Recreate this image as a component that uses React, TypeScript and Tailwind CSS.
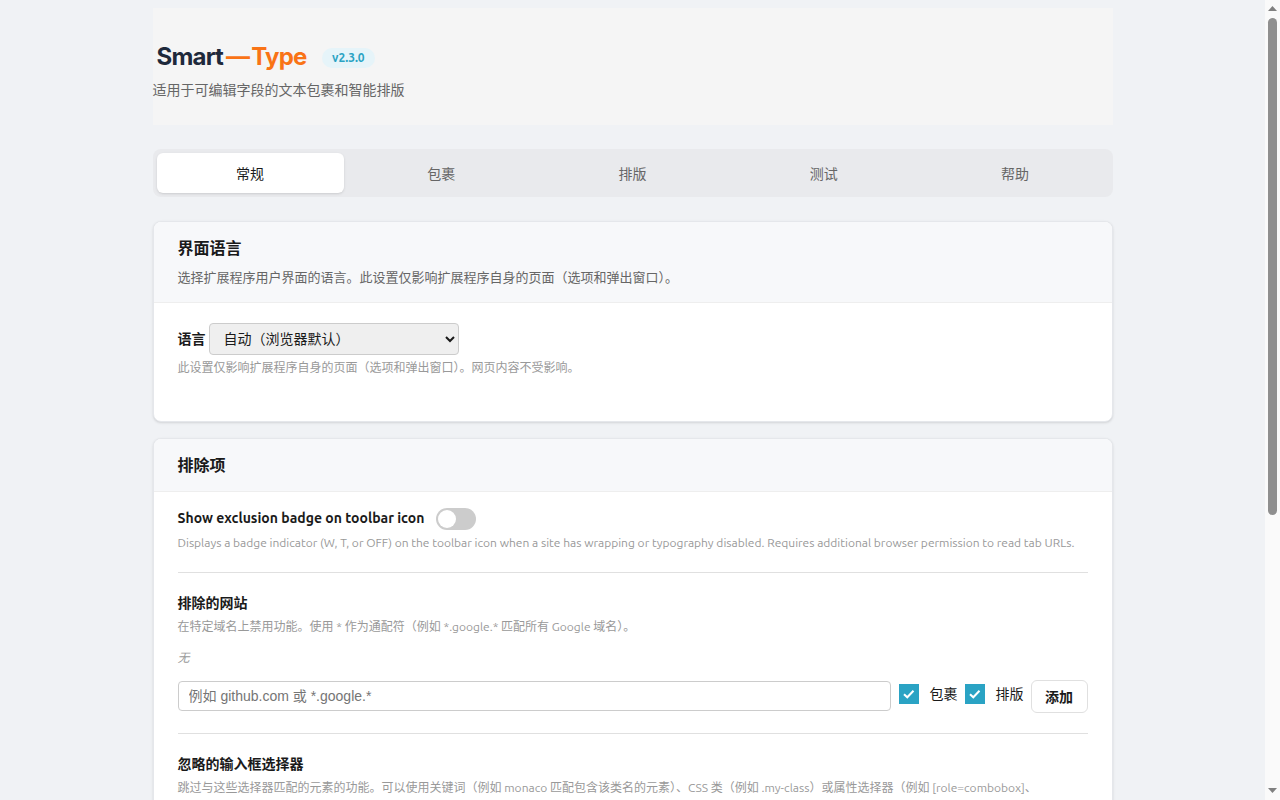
// ============================================================
// Options page
// ============================================================

const tabs = ['常规', '包裹', '排版', '测试', '帮助']

function Check({ label, className }: { label: string; className?: string }) {
  return (
    <label className={`mt-1 flex items-center gap-[11px] text-sm text-[#1a1a1a] ${className ?? ''}`}>
      <span className="flex h-5 w-5 items-center justify-center bg-[#2aa3c4]">
        <svg width="12" height="12" viewBox="0 0 12 12" fill="none">
          <path d="M1 6.2 L4.3 9.3 L10.5 2.8" stroke="white" strokeWidth="2" />
        </svg>
      </span>
      {label}
    </label>
  )
}

// The window's own scrollbar does not get drawn here, so it is part of the page
function Scrollbar() {
  return (
    <div className="flex h-screen w-[15px] shrink-0 flex-col items-center bg-[#fafafa]">
      <svg width="9" height="5" viewBox="0 0 9 5" className="mt-[6px] shrink-0">
        <path d="M4.5 0 L9 5 L0 5 Z" fill="#808080" />
      </svg>
      <div className="mt-[7px] h-[497px] w-[9px] shrink-0 rounded-full bg-[#8f8f8f]" />
      <div className="flex-1" />
      <svg width="9" height="5" viewBox="0 0 9 5" className="mb-[7px] shrink-0">
        <path d="M0 0 L9 0 L4.5 5 Z" fill="#808080" />
      </svg>
    </div>
  )
}

export default function App() {
  return (
    <div className="flex h-screen overflow-hidden bg-[#f0f2f5] font-['Ubuntu','Noto_Sans_CJK_SC',sans-serif]">
      <main className="h-screen min-w-0 flex-1 overflow-hidden">
        <div className="mx-auto w-[960px] pt-2 pb-6">
          {/* Header */}
          <header className="h-[117px] bg-[#f5f5f5] pt-[34px]">
            <div className="flex h-[32px] items-center pl-1">
              <h1 className="mb-[2px] font-['Inter',sans-serif] text-2xl font-bold tracking-[-0.8px] text-[#1e293b]">
                Smart<span className="mr-[2px] ml-[3px] text-[#f97316]">—</span>
                <span className="text-[#f97316]">Type</span>
              </h1>
              <span className="ml-[15px] rounded-full bg-[#e6f4f9] px-[10.5px] py-[2px] text-xs font-semibold text-[#2aa3c4]">
                v2.3.0
              </span>
            </div>
            <p className="mt-[6px] text-sm leading-[20px] text-[#666666]">适用于可编辑字段的文本包裹和智能排版</p>
          </header>

          {/* Tabs */}
          <nav className="mt-6 flex h-12 gap-1 rounded-lg bg-[#e9eaed] p-1">
            {tabs.map((t, i) => (
              <div
                key={t}
                className={`flex flex-1 items-center justify-center rounded-md pt-[2px] text-sm ${
                  i === 0 ? 'bg-white text-[#1a1a1a] shadow-sm' : 'text-[#666666]'
                }`}
              >
                {t}
              </div>
            ))}
          </nav>

          {/* Language */}
          <section className="mt-6 overflow-hidden rounded-lg border border-[#e5e7eb] bg-white shadow-sm">
            <div className="h-[81px] border-b border-[#eeeeee] bg-[#f7f8fa] px-6 pt-[14px]">
              <h2 className="text-base leading-[24px] font-semibold text-[#1a1a1a]">界面语言</h2>
              <p className="mt-[7px] text-[13px] leading-[20px] text-[#666666]">
                选择扩展程序用户界面的语言。此设置仅影响扩展程序自身的页面（选项和弹出窗口）。
              </p>
            </div>
            <div className="h-[118px] px-6 pt-5">
              <div className="flex items-center gap-[3px]">
                <span className="text-sm font-semibold text-[#1a1a1a]">语言</span>
                <select className="h-8 w-[250px] rounded border border-[#cccccc] bg-[#efefef] pl-[10px] text-sm text-[#1a1a1a]">
                  <option>自动（浏览器默认）</option>
                </select>
              </div>
              <p className="mt-[3px] text-xs leading-[20px] text-[#999999]">
                此设置仅影响扩展程序自身的页面（选项和弹出窗口）。网页内容不受影响。
              </p>
            </div>
          </section>

          {/* Exclusions */}
          <section className="mt-4 overflow-hidden rounded-lg border border-[#e5e7eb] bg-white shadow-sm">
            <div className="flex h-[53px] items-center border-b border-[#eeeeee] bg-[#f7f8fa] px-6">
              <h2 className="text-base font-semibold text-[#1a1a1a]">排除项</h2>
            </div>
            <div className="px-6 pb-10">
              <div className="border-b border-[#e0e0e0] pt-[15px] pb-5">
                <div className="flex items-center gap-3">
                  <span className="text-sm font-semibold text-[#1a1a1a]">Show exclusion badge on toolbar icon</span>
                  <span className="flex h-[22px] w-10 translate-y-px items-center rounded-full bg-[#cccccc] px-[2px]">
                    <span className="h-[18px] w-[18px] rounded-full bg-white" />
                  </span>
                </div>
                <p className="mt-[5px] text-xs leading-[18px] text-[#999999]">
                  Displays a badge indicator (W, T, or OFF) on the toolbar icon when a site has wrapping or typography disabled. Requires additional browser permission to read tab URLs.
                </p>
              </div>

              <div className="border-b border-[#e0e0e0] pt-5 pb-5">
                <h3 className="text-sm leading-[20px] font-semibold text-[#1a1a1a]">排除的网站</h3>
                <p className="mt-[4px] text-xs leading-[20px] text-[#999999]">
                  在特定域名上禁用功能。使用 * 作为通配符（例如 *.google.* 匹配所有 Google 域名）。
                </p>
                <p className="mt-[11px] text-xs leading-[20px] text-[#999999] italic">无</p>
                <div className="mt-[12px] flex items-start gap-2">
                  <input
                    readOnly
                    placeholder="例如 github.com 或 *.google.*"
                    className="mt-[1px] h-[30px] flex-1 rounded border border-[#cccccc] px-[10px] font-['Liberation_Sans','Noto_Sans_CJK_SC',sans-serif] text-sm placeholder:text-[#757575]"
                  />
                  <Check label="包裹" />
                  <Check label="排版" className="-ml-[1px]" />
                  <button className="-ml-[1px] h-[33px] w-[57px] rounded-md border border-[#e0e0e0] text-sm font-semibold text-[#1a1a1a]">
                    添加
                  </button>
                </div>
              </div>

              <div className="pt-5">
                <h3 className="text-sm leading-[20px] font-semibold text-[#1a1a1a]">忽略的输入框选择器</h3>
                <p className="mt-[4px] text-xs leading-[20px] text-[#999999]">
                  跳过与这些选择器匹配的元素的功能。可以使用关键词（例如 monaco 匹配包含该类名的元素）、CSS 类（例如 .my-class）或属性选择器（例如 [role=combobox]、
                  <span className="whitespace-nowrap">aria-readonly</span>。
                </p>
              </div>
            </div>
          </section>
        </div>
      </main>
      <Scrollbar />
    </div>
  )
}
